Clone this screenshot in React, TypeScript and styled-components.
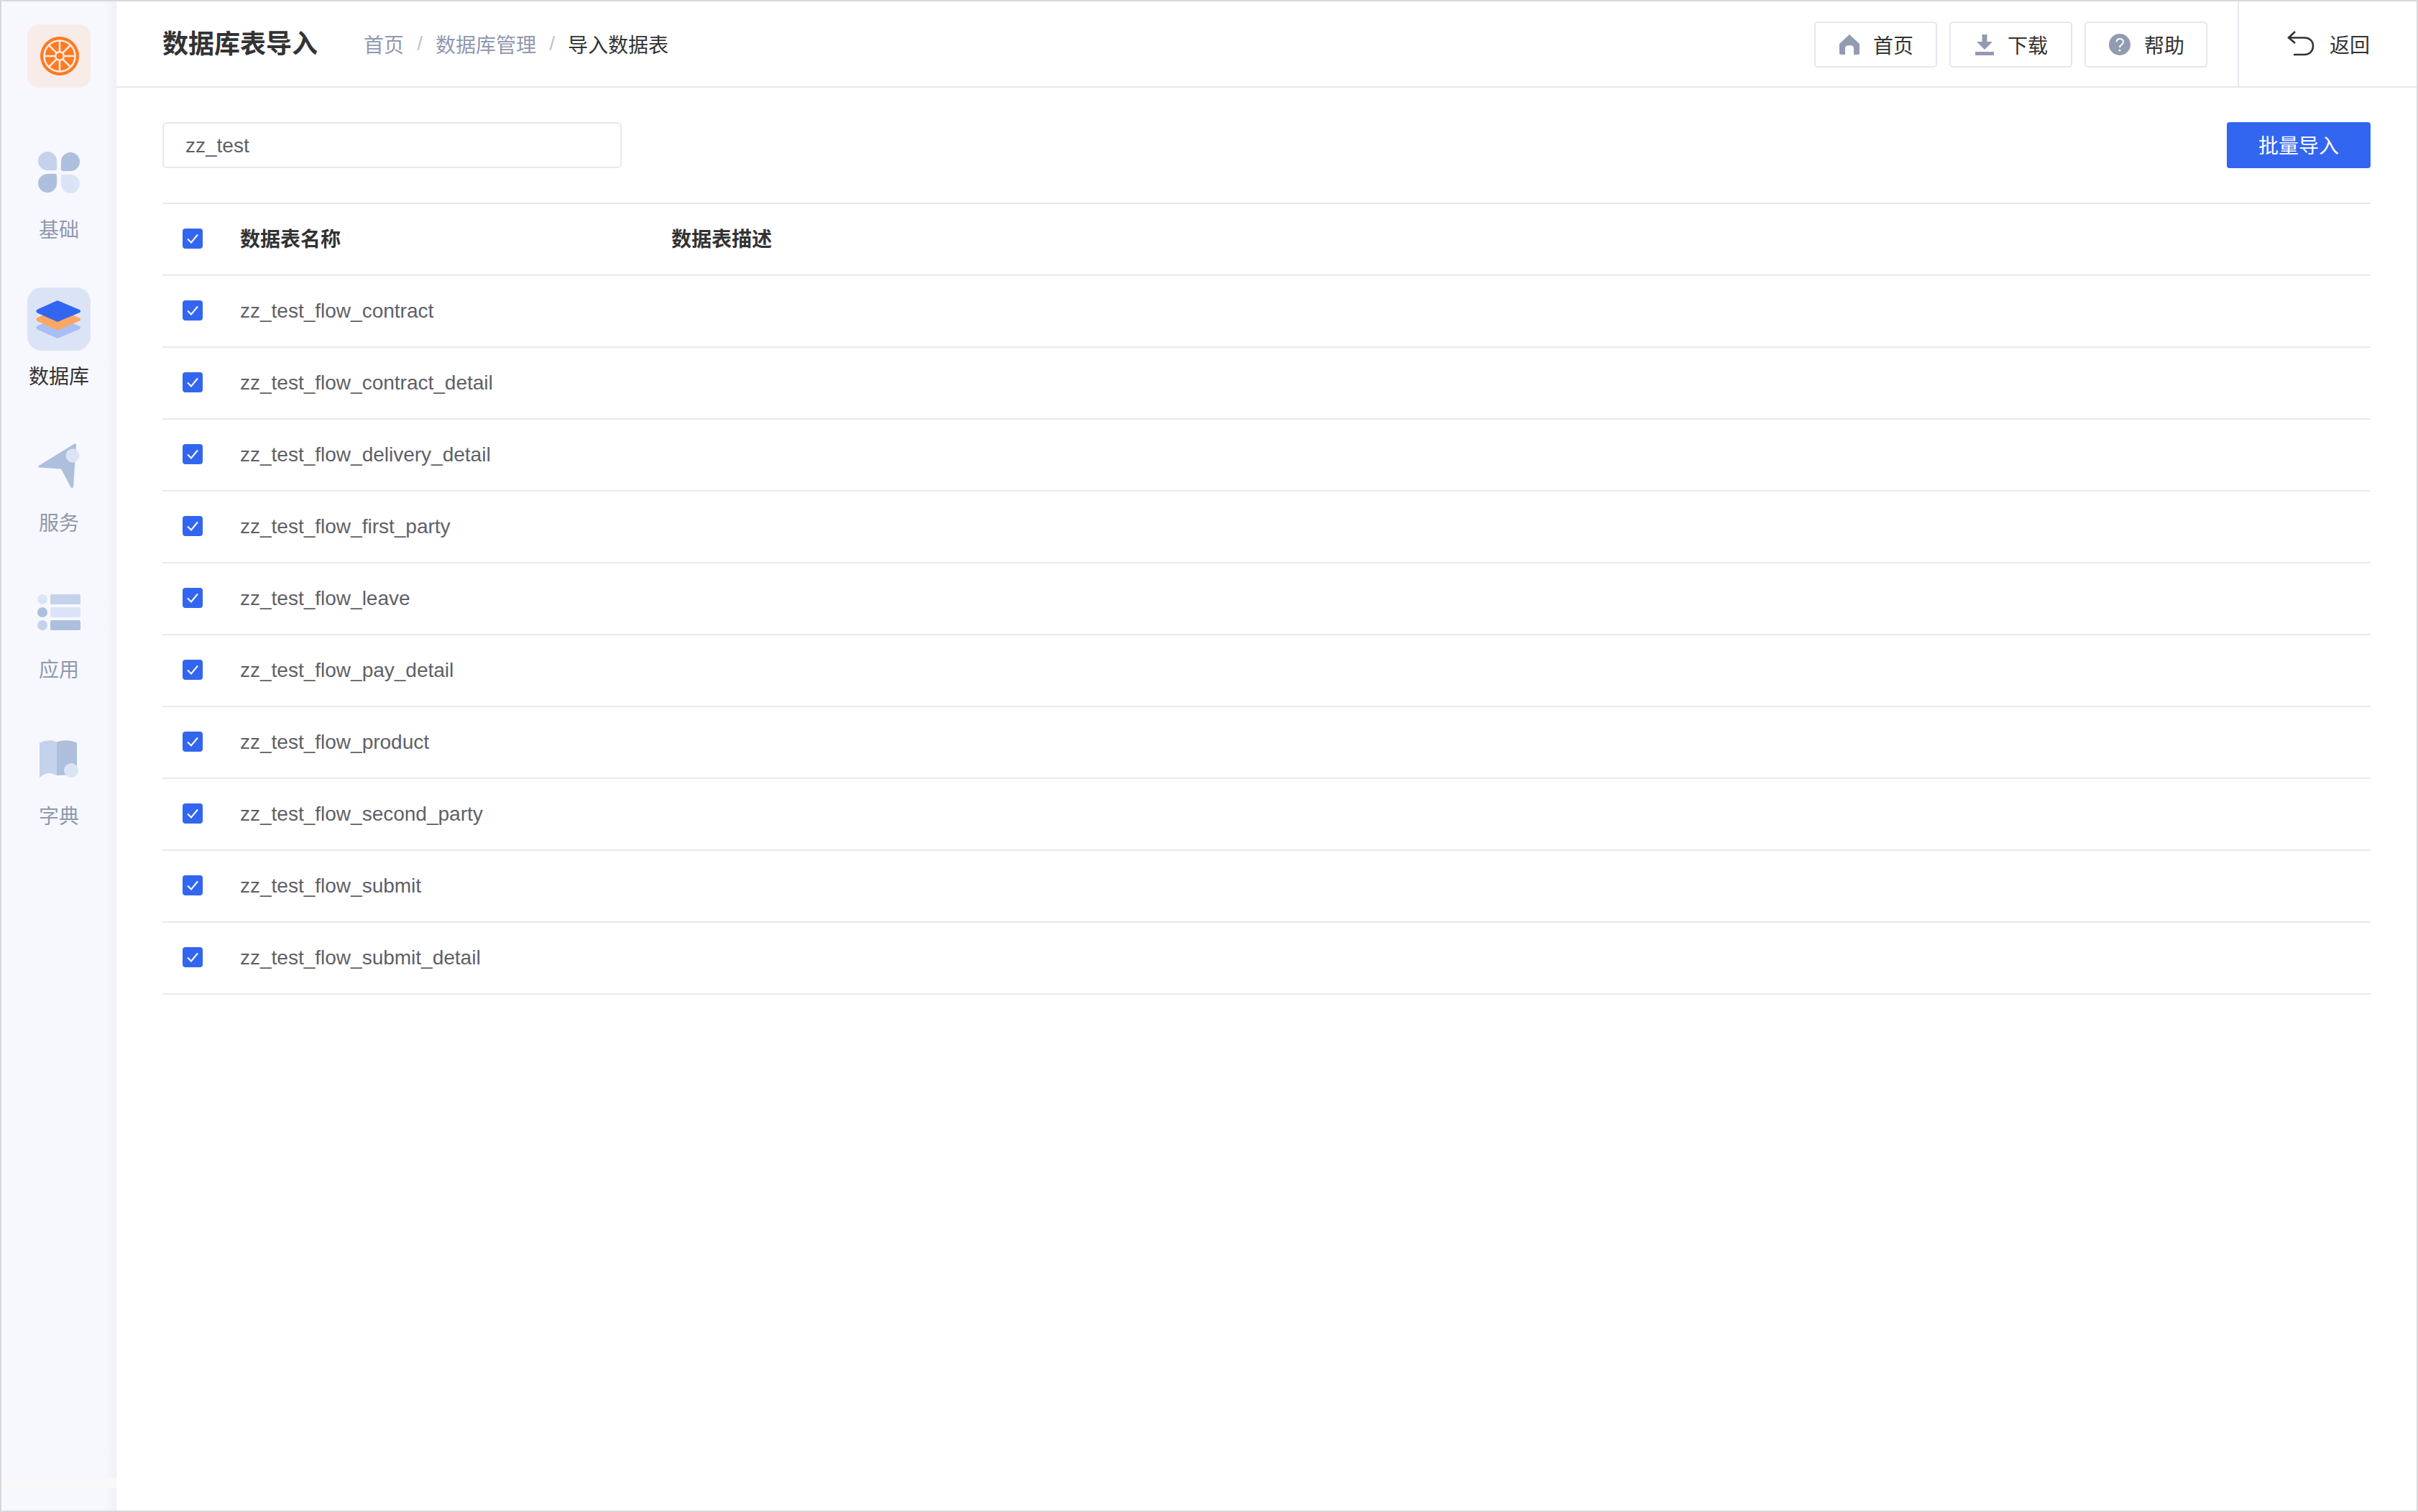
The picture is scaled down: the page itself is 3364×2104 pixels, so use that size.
import React from "react";
import styled, { createGlobalStyle } from "styled-components";

const Global = createGlobalStyle`
  html, body { margin: 0; padding: 0; background: #fff; }
  body { font-family: "Liberation Sans", "Noto Sans CJK SC", sans-serif; }
  * { box-sizing: border-box; }
`;

const Frame = styled.div`
  position: relative;
  display: flex;
  width: 3364px;
  height: 2104px;
  border: 2px solid #d8d8db;
  background: #fff;
  overflow: hidden;
`;

const Sidebar = styled.aside`
  position: relative;
  flex: 0 0 160px;
  display: flex;
  flex-direction: column;
  align-items: center;
  padding-top: 32px;
  background: linear-gradient(to right, #f7f8fe calc(100% - 14px), #eff0f6);
`;

const Glitch = styled.div`
  position: absolute;
  left: 0;
  right: 0;
  bottom: 32px;
  height: 14px;
  background: #f9f9f9;
`;

const LogoTile = styled.div`
  width: 88px;
  height: 88px;
  margin-bottom: 74px;
  border-radius: 16px;
  background: #f7ece7;
`;

const Nav = styled.nav`
  display: flex;
  flex-direction: column;
  gap: 59px;
`;

const NavItem = styled.div`
  display: flex;
  flex-direction: column;
  align-items: center;
  width: 88px;
`;

const NavTile = styled.div<{ $active?: boolean }>`
  width: 88px;
  height: 88px;
  border-radius: 20px;
  background: ${(p) => (p.$active ? "#dbe4f7" : "transparent")};
`;

const NavLabel = styled.span<{ $active?: boolean }>`
  margin-top: 17px;
  font-size: 28px;
  line-height: 40px;
  white-space: nowrap;
  color: ${(p) => (p.$active ? "#333333" : "#8f98ae")};
`;

const TileSvg = styled.svg`
  display: block;
  width: 88px;
  height: 88px;
`;

const Main = styled.main`
  flex: 1;
  min-width: 0;
  display: flex;
  flex-direction: column;
`;

const Header = styled.header`
  flex: 0 0 120px;
  display: flex;
  align-items: stretch;
  padding-left: 64px;
  border-bottom: 2px solid #e7e7ec;
`;

const Title = styled.h1`
  margin: 2px 64px 0 0;
  align-self: center;
  font-size: 36px;
  line-height: 50px;
  font-weight: 700;
  color: #333333;
  white-space: nowrap;
`;

const Breadcrumb = styled.div`
  flex: 1;
  display: flex;
  align-items: center;
  font-size: 28px;
  color: #333333;
`;

const Crumb = styled.span<{ $current?: boolean }>`
  color: ${(p) => (p.$current ? "#333333" : "#8f98ae")};
  white-space: nowrap;
`;

const CrumbSep = styled.span`
  width: 44px;
  text-align: center;
  color: #bcc3d2;
  font-family: "Liberation Sans", sans-serif;
`;

const HeaderActions = styled.div`
  display: flex;
  align-items: center;
  gap: 17px;
  padding: 2px 42px 0 0;
  border-right: 2px solid #e7e7ec;
`;

const ActionButton = styled.button`
  display: flex;
  align-items: center;
  justify-content: center;
  gap: 19px;
  width: 171px;
  height: 64px;
  padding: 0 0 0 2px;
  border: 2px solid #e7e7ec;
  border-radius: 5px;
  background: #fff;
  font: inherit;
  font-size: 28px;
  color: #333333;
`;

const BackLink = styled.div`
  display: flex;
  align-items: center;
  gap: 21px;
  width: 247px;
  padding-left: 67px;
  font-size: 28px;
  color: #333333;
`;

const Content = styled.section`
  flex: 1;
  padding: 48px 64px 0;
`;

const Toolbar = styled.div`
  display: flex;
  justify-content: space-between;
  align-items: center;
  height: 64px;
  margin-bottom: 48px;
`;

const SearchField = styled.div`
  display: flex;
  align-items: center;
  width: 639px;
  height: 64px;
  padding: 2px 30px 0;
  border: 2px solid #e7e7ec;
  border-radius: 6px;
  font-size: 28px;
  color: #5f6066;
`;

const PrimaryButton = styled.button`
  width: 200px;
  height: 64px;
  padding: 0 0 2px;
  border: 0;
  border-radius: 4px;
  background: #3366f0;
  font: inherit;
  font-size: 28px;
  color: #fff;
`;

const Table = styled.div`
  border-top: 2px solid #e7e7ec;
`;

const Row = styled.div`
  display: grid;
  grid-template-columns: 80px 600px 1fr;
  align-items: center;
  height: 100px;
  padding: 0 0 4px 28px;
  border-bottom: 2px solid #e9e9ee;
  font-size: 28px;
  color: #5f6066;
`;

const HeadCell = styled.div`
  font-weight: 700;
  color: #333333;
`;

const NameCell = styled.div`
  padding-top: 3px;
  white-space: nowrap;
`;

const CheckBox = styled.span`
  display: flex;
  align-items: center;
  justify-content: center;
  width: 28px;
  height: 28px;
  margin-top: 2px;
  border-radius: 4px;
  background: #3366f0;
`;

const Check = () => (
  <CheckBox>
    <svg width="18" height="16" viewBox="0 0 18 16" fill="none">
      <path d="M2 8.5 L7 13.5 L16 2.5" stroke="#fff" strokeWidth="2" />
    </svg>
  </CheckBox>
);

const Logo = () => (
  <TileSvg viewBox="0 0 88 88">
    <circle cx="45" cy="44" r="27" fill="#ff7a21" />
    <circle cx="45" cy="44" r="21.5" fill="none" stroke="#f7ece7" strokeWidth="2.6" />
    <g stroke="#f7ece7" strokeWidth="2.6">
      <path d="M45 23V65M24 44H66M30.2 29.2L59.8 58.8M59.8 29.2L30.2 58.8" />
    </g>
    <circle cx="45" cy="44" r="7" fill="#f7ece7" />
    <circle cx="45" cy="44" r="4.6" fill="#ff7a21" />
  </TileSvg>
);

const PETAL =
  "M13 0A13 13 0 0 1 26 13C26 18 26.6 22 25.6 25.6C22 26.600 18 26 13 26A13 13 0 0 1 13 0z";

const BasicIcon = () => (
  <TileSvg viewBox="0 0 88 88">
    <path d={PETAL} transform="translate(15 15)" fill="#c5d2ec" />
    <path d={PETAL} transform="translate(73 16) scale(-1 1)" fill="#aebfdd" />
    <path d={PETAL} transform="translate(15 72) scale(1 -1)" fill="#aebfdd" />
    <path d={PETAL} transform="translate(73 73) rotate(180)" fill="#dbe4f7" />
  </TileSvg>
);

const Layer = ({ y, fill }: { y: number; fill: string }) => (
  <path
    d={`M41 ${y - 14.5}Q42 ${y - 15} 43 ${y - 14.5}L72.800 ${y - 2}Q75.500 ${y} 72.800 ${y + 2}L43 ${y + 14.5}Q42 ${y + 15} 41 ${y + 14.5}L14 ${y + 2.5}Q10.800 ${y} 14 ${y - 2.5}z`}
    fill={fill}
  />
);

const DatabaseIcon = () => (
  <TileSvg viewBox="0 0 88 88">
    <Layer y={56} fill="#a9bef5" />
    <Layer y={44.5} fill="#ffa65f" />
    <Layer y={33} fill="#3366f0" />
  </TileSvg>
);

const ServiceIcon = () => (
  <TileSvg viewBox="0 0 88 88">
    <path
      d="M65.500 13.500Q68 12.500 68 15L64 73.500Q63 76.500 60.500 74L47 48.500L17 46.500Q14 45.500 16 44z"
      fill="#aebfdd"
    />
    <circle cx="63" cy="30" r="9.500" fill="#dbe4f7" />
  </TileSvg>
);

const AppIcon = () => (
  <TileSvg viewBox="0 0 88 88">
    <circle cx="21" cy="26" r="7" fill="#dbe4f7" />
    <circle cx="21" cy="44" r="7" fill="#aebfdd" />
    <circle cx="21" cy="62" r="7" fill="#c5d2ec" />
    <rect x="32" y="19" width="42" height="14" rx="2" fill="#c5d2ec" />
    <rect x="32" y="37" width="42" height="14" rx="2" fill="#dbe4f7" />
    <rect x="32" y="55" width="42" height="14" rx="2" fill="#aebfdd" />
  </TileSvg>
);

const DictIcon = () => (
  <TileSvg viewBox="0 0 88 88">
    <path d="M17 21.500Q30 15.500 41 20.500V67Q28 59.500 17 70z" fill="#c5d2ec" />
    <path d="M41 20.500Q55 15.500 69 21.500V66L41 67z" fill="#aebfdd" />
    <circle cx="61" cy="60" r="10" fill="#dbe4f7" />
  </TileSvg>
);

const navItems = [
  { label: "基础", icon: <BasicIcon /> },
  { label: "数据库", icon: <DatabaseIcon />, active: true },
  { label: "服务", icon: <ServiceIcon /> },
  { label: "应用", icon: <AppIcon /> },
  { label: "字典", icon: <DictIcon /> },
];

const HomeIcon = () => (
  <svg width="28" height="28" viewBox="0 0 28 28">
    <path
      d="M14 0L28 13V26Q28 28 26 28H20V19Q20 15 14 15Q8 15 8 19V28H2Q0 28 0 26V13z"
      fill="#929bb0"
    />
  </svg>
);

const DownloadIcon = () => (
  <svg width="26" height="29" viewBox="0 0 26 29">
    <path d="M9.500 0H16.500V10H24L13 21L2 10H9.500z" fill="#929bb0" />
    <rect x="0" y="24" width="26" height="5" fill="#929bb0" />
  </svg>
);

const HelpIcon = () => (
  <svg width="30" height="30" viewBox="0 0 30 30">
    <circle cx="15" cy="15" r="15" fill="#929bb0" />
    <path
      d="M10.500 11.500C10.500 5.500 20 5.500 20 11.500C20 15 15 15 15 19"
      fill="none"
      stroke="#fff"
      strokeWidth="2"
    />
    <circle cx="15" cy="23" r="1.500" fill="#fff" />
  </svg>
);

const BackIcon = () => (
  <svg width="38" height="36" viewBox="0 0 38 36" fill="none">
    <path
      d="M11 1L2 9.500L11 17M2 9.500H24C31 9.500 36 14 36 21C36 28 31 33 24 33H9"
      stroke="#333333"
      strokeWidth="2.600"
    />
  </svg>
);

const tables = [
  "zz_test_flow_contract",
  "zz_test_flow_contract_detail",
  "zz_test_flow_delivery_detail",
  "zz_test_flow_first_party",
  "zz_test_flow_leave",
  "zz_test_flow_pay_detail",
  "zz_test_flow_product",
  "zz_test_flow_second_party",
  "zz_test_flow_submit",
  "zz_test_flow_submit_detail",
];

export default function App() {
  return (
    <>
      <Global />
      <Frame>
        <Sidebar>
          <LogoTile>
            <Logo />
          </LogoTile>
          <Nav>
            {navItems.map((item) => (
              <NavItem key={item.label}>
                <NavTile $active={item.active}>{item.icon}</NavTile>
                <NavLabel $active={item.active}>{item.label}</NavLabel>
              </NavItem>
            ))}
          </Nav>
          <Glitch />
        </Sidebar>
        <Main>
          <Header>
            <Title>数据库表导入</Title>
            <Breadcrumb>
              <Crumb>首页</Crumb>
              <CrumbSep>/</CrumbSep>
              <Crumb>数据库管理</Crumb>
              <CrumbSep>/</CrumbSep>
              <Crumb $current>导入数据表</Crumb>
            </Breadcrumb>
            <HeaderActions>
              <ActionButton>
                <HomeIcon />
                首页
              </ActionButton>
              <ActionButton>
                <DownloadIcon />
                下载
              </ActionButton>
              <ActionButton>
                <HelpIcon />
                帮助
              </ActionButton>
            </HeaderActions>
            <BackLink>
              <BackIcon />
              返回
            </BackLink>
          </Header>
          <Content>
            <Toolbar>
              <SearchField>zz_test</SearchField>
              <PrimaryButton>批量导入</PrimaryButton>
            </Toolbar>
            <Table>
              <Row>
                <Check />
                <HeadCell>数据表名称</HeadCell>
                <HeadCell>数据表描述</HeadCell>
              </Row>
              {tables.map((name) => (
                <Row key={name}>
                  <Check />
                  <NameCell>{name}</NameCell>
                  <div />
                </Row>
              ))}
            </Table>
          </Content>
        </Main>
      </Frame>
    </>
  );
}
